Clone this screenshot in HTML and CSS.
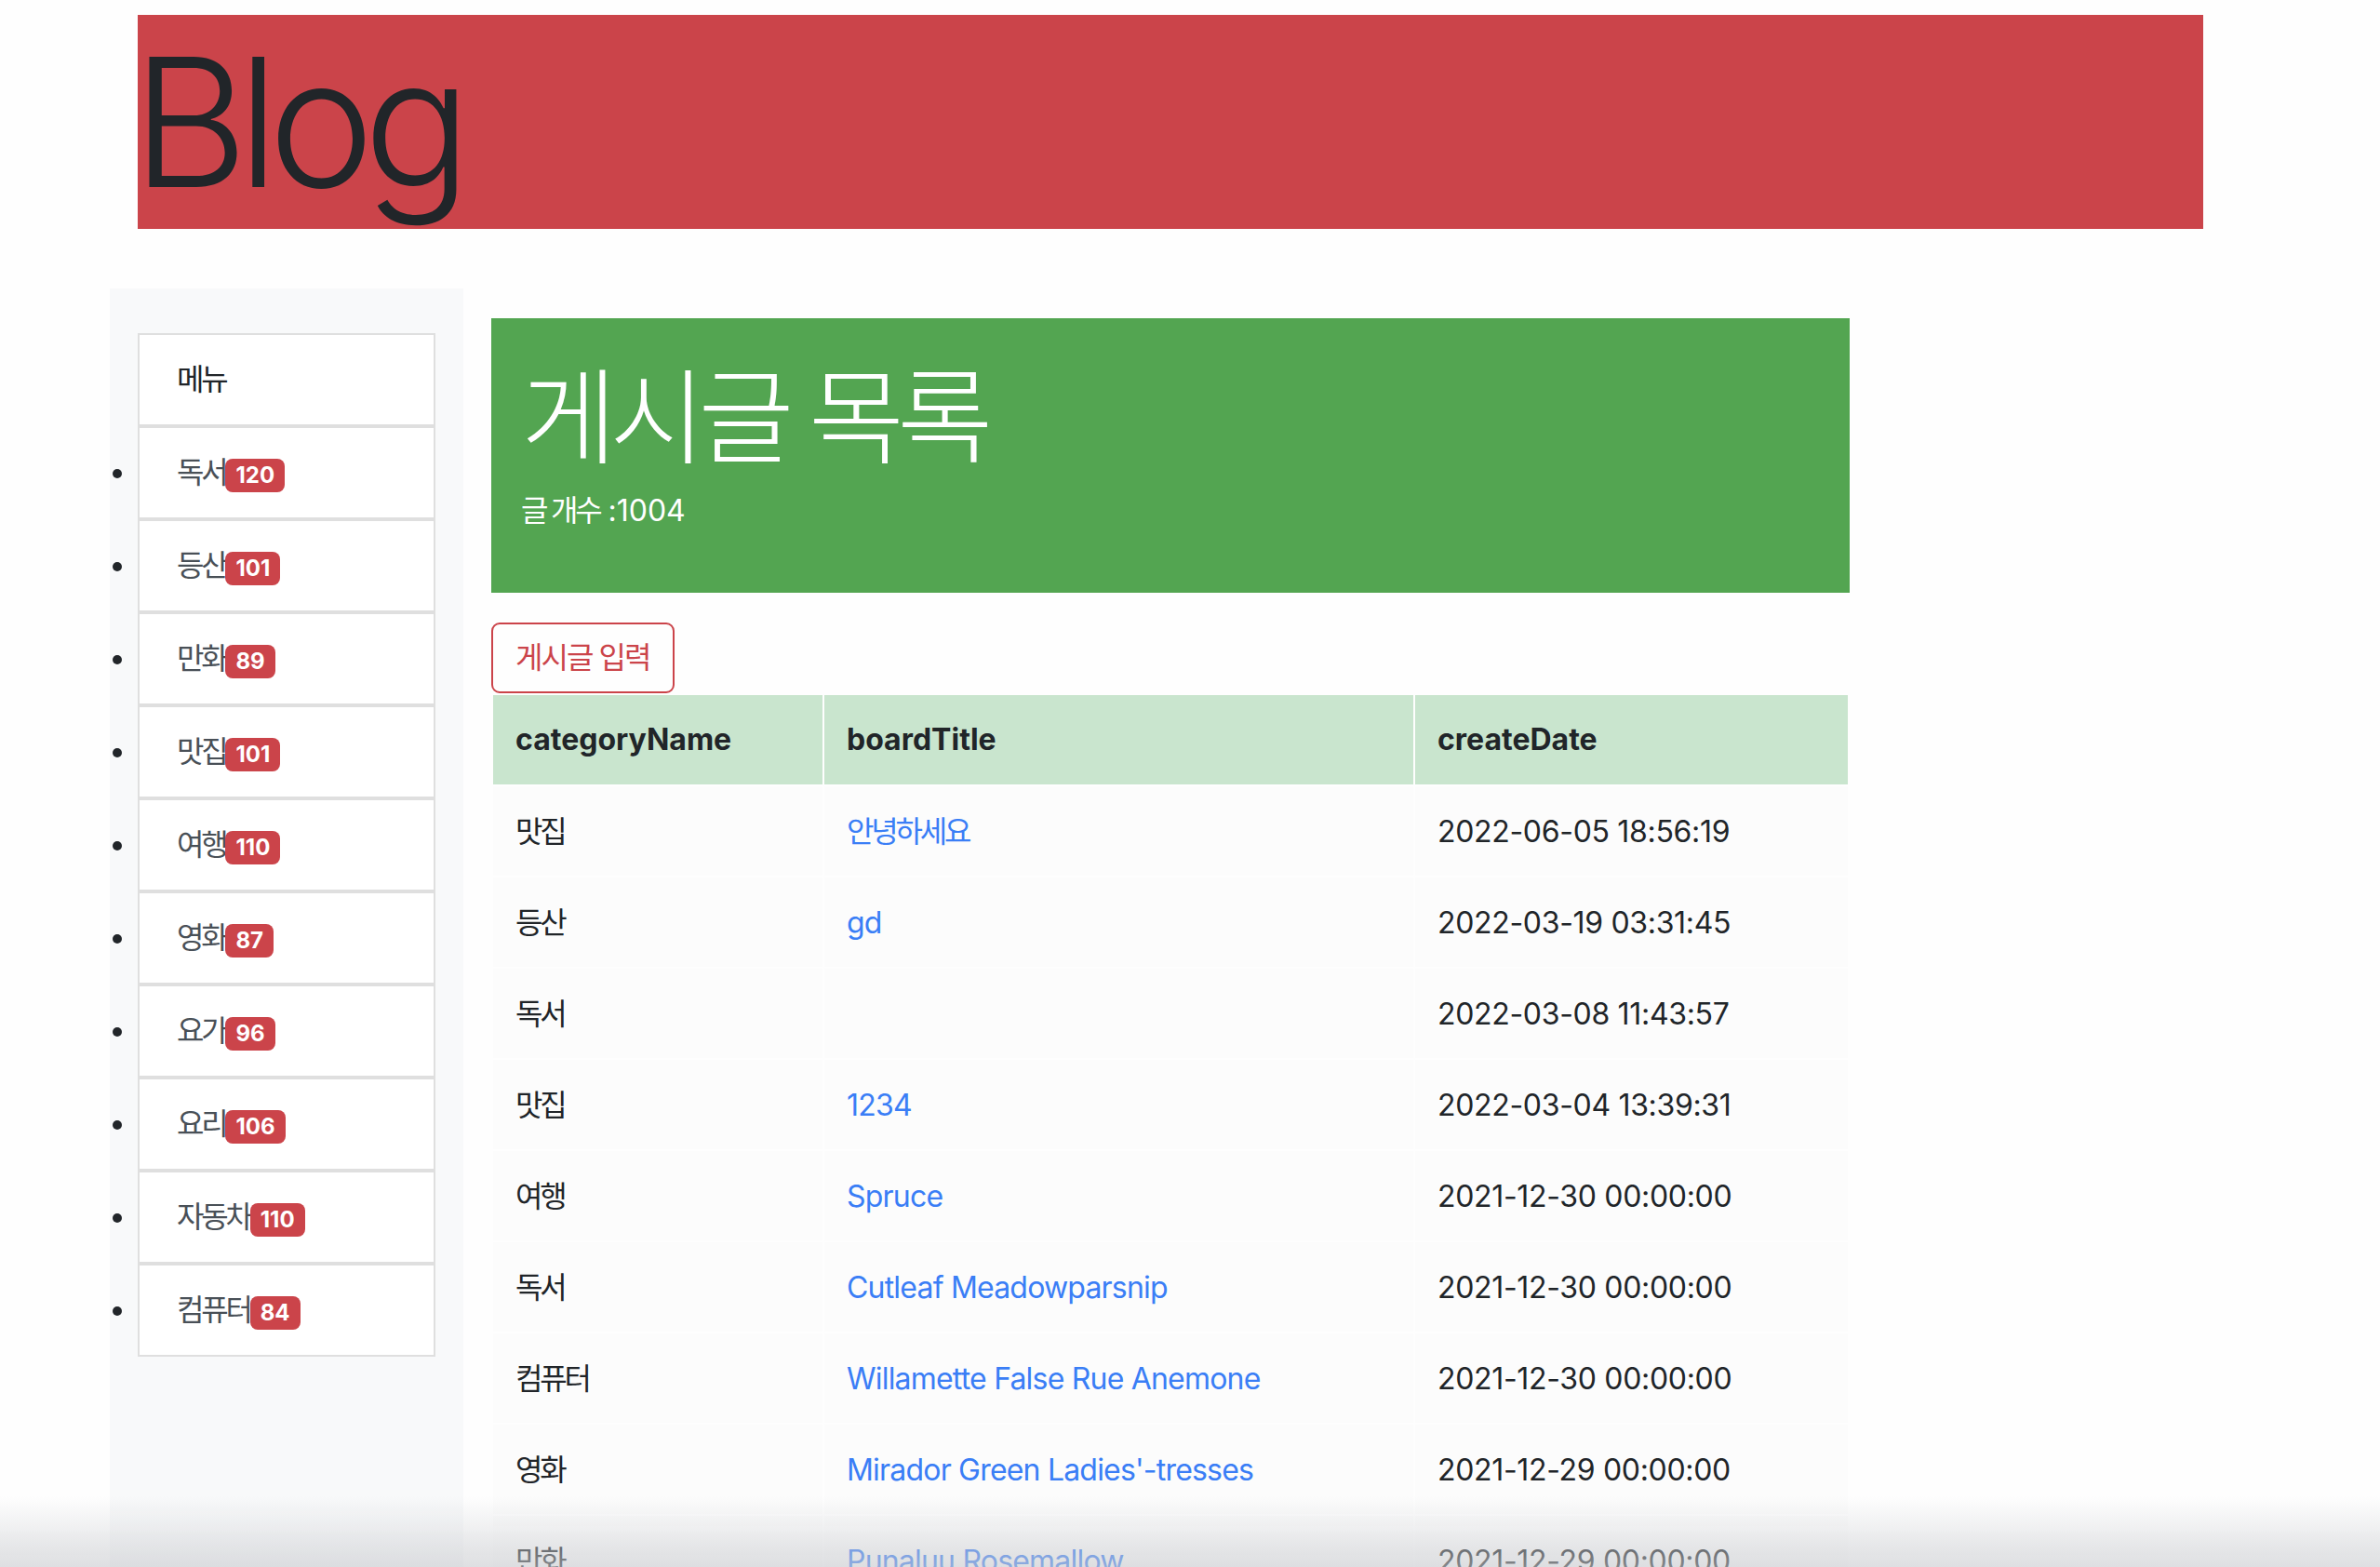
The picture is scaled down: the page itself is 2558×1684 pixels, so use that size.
FILE: index.html
```html
<!DOCTYPE html>
<html lang="ko">
<head>
<meta charset="utf-8">
<title>Blog</title>
<link rel="stylesheet" href="styles.css">
</head>
<body>
<h1 class="site-title">Blog</h1>
<div class="layout">
  <aside class="sidebar">
    <ul class="menu">
      <li class="menu-item menu-head"><span class="ko">메뉴</span></li>
      <li class="menu-item"><span class="ko">독서</span><span class="badge">120</span></li>
      <li class="menu-item"><span class="ko">등산</span><span class="badge">101</span></li>
      <li class="menu-item"><span class="ko">만화</span><span class="badge">89</span></li>
      <li class="menu-item"><span class="ko">맛집</span><span class="badge">101</span></li>
      <li class="menu-item"><span class="ko">여행</span><span class="badge">110</span></li>
      <li class="menu-item"><span class="ko">영화</span><span class="badge">87</span></li>
      <li class="menu-item"><span class="ko">요가</span><span class="badge">96</span></li>
      <li class="menu-item"><span class="ko">요리</span><span class="badge">106</span></li>
      <li class="menu-item"><span class="ko">자동차</span><span class="badge">110</span></li>
      <li class="menu-item"><span class="ko">컴퓨터</span><span class="badge">84</span></li>
    </ul>
  </aside>
  <main class="content">
    <section class="jumbo">
      <h2 class="jumbo-title">게시글 목록</h2>
      <p class="jumbo-count"><span class="ko">글 개수</span> :1004</p>
    </section>
    <div class="actions">
      <a class="btn-outline" href="#"><span class="ko btn-label">게시글 입력</span></a>
    </div>
    <table class="board">
      <thead>
        <tr>
          <th class="c1">categoryName</th>
          <th class="c2">boardTitle</th>
          <th class="c3">createDate</th>
        </tr>
      </thead>
      <tbody>
        <tr><td><span class="ko">맛집</span></td><td><a href="#"><span class="ko">안녕하세요</span></a></td><td>2022-06-05 18:56:19</td></tr>
        <tr><td><span class="ko">등산</span></td><td><a href="#">gd</a></td><td>2022-03-19 03:31:45</td></tr>
        <tr><td><span class="ko">독서</span></td><td></td><td>2022-03-08 11:43:57</td></tr>
        <tr><td><span class="ko">맛집</span></td><td><a href="#">1234</a></td><td>2022-03-04 13:39:31</td></tr>
        <tr><td><span class="ko">여행</span></td><td><a href="#">Spruce</a></td><td>2021-12-30 00:00:00</td></tr>
        <tr><td><span class="ko">독서</span></td><td><a href="#">Cutleaf Meadowparsnip</a></td><td>2021-12-30 00:00:00</td></tr>
        <tr><td><span class="ko">컴퓨터</span></td><td><a href="#">Willamette False Rue Anemone</a></td><td>2021-12-30 00:00:00</td></tr>
        <tr><td><span class="ko">영화</span></td><td><a href="#">Mirador Green Ladies'-tresses</a></td><td>2021-12-29 00:00:00</td></tr>
        <tr><td><span class="ko">만화</span></td><td><a href="#">Punaluu Rosemallow</a></td><td>2021-12-29 00:00:00</td></tr>
      </tbody>
    </table>
  </main>
</div>
<div class="bottom-fade"></div>
</body>
</html>
```

FILE: styles.css
```css
html, body {
  margin: 0;
  padding: 0;
}
body {
  background: #fefefe;
  color: #212529;
  font-family: "Inter", "Noto Sans CJK KR", sans-serif;
  font-size: 32px;
  line-height: 48px;
  height: 1684px;
  overflow: hidden;
}
.ko {
  font-family: "Noto Sans CJK KR", sans-serif;
  letter-spacing: -0.1em;
  line-height: 1;
}
.site-title {
  margin: 16px 0 0 148px;
  width: 2220px;
  background: #cb444a;
  font-size: 192px;
  font-weight: 300;
  line-height: 1.2;
  letter-spacing: -0.06em;
  text-indent: -6px;
  color: #212529;
}
.layout {
  display: flex;
  align-items: flex-start;
  margin-top: 64px;
}
.sidebar {
  margin-left: 118px;
  width: 380px;
  box-sizing: border-box;
  padding: 48px 30px 0 30px;
  background: #f8f9fa;
  height: 1500px;
}
.menu {
  margin: 0;
  padding: 0;
  list-style: disc outside;
}
.menu-item {
  background: #fff;
  border: 2px solid #dfdfdf;
  padding: 24px 40px;
  line-height: 48px;
  color: #495057;
}
.menu-item::marker {
  color: #212529;
}
.menu-head {
  list-style: none;
  color: #212529;
}
.badge {
  display: inline-block;
  font-family: "Inter", sans-serif;
  font-size: 24px;
  font-weight: 700;
  line-height: 1;
  padding: 6px 11px;
  border-radius: 8px;
  background: #cb444a;
  color: #fff;
  vertical-align: baseline;
  letter-spacing: 0;
}
.content {
  margin-left: 30px;
  width: 1460px;
  padding-top: 32px;
}
.jumbo {
  background: #53a551;
  color: #fff;
  padding: 32px;
}
.jumbo-title {
  margin: 0 0 16px 0;
  font-family: "Noto Sans CJK KR", sans-serif;
  font-size: 112px;
  font-weight: 300;
  line-height: 1.2;
  letter-spacing: -0.07em;
}
.jumbo-count {
  margin: 0 0 32px 0;
}
.actions {
  display: flex;
  margin-top: 32px;
}
.btn-outline {
  display: block;
  border: 2px solid #cb444a;
  border-radius: 9px;
  padding: 12px 24px;
  color: #cb444a;
  text-decoration: none;
  line-height: 48px;
}
.btn-label {
  letter-spacing: -0.06em;
}
.board {
  width: 1460px;
  border-collapse: separate;
  border-spacing: 2px;
  letter-spacing: -0.01em;
}
.board th, .board td {
  padding: 25px 24px 23px 24px;
  text-align: left;
  vertical-align: top;
  line-height: 48px;
}
.board th {
  background: #c9e5ce;
  font-weight: 700;
  letter-spacing: 0;
  padding: 24px;
}
.board td {
  background: #fcfcfc;
}
.board .c1 { width: 306px; }
.board .c2 { width: 585px; }
.board a {
  color: #3a7ef6;
  text-decoration: none;
  letter-spacing: -0.025em;
}
.bottom-fade {
  position: fixed;
  left: 0;
  right: 0;
  bottom: 0;
  height: 76px;
  background: linear-gradient(rgba(200,202,206,0), rgba(200,202,206,0.6));
  pointer-events: none;
}
```
